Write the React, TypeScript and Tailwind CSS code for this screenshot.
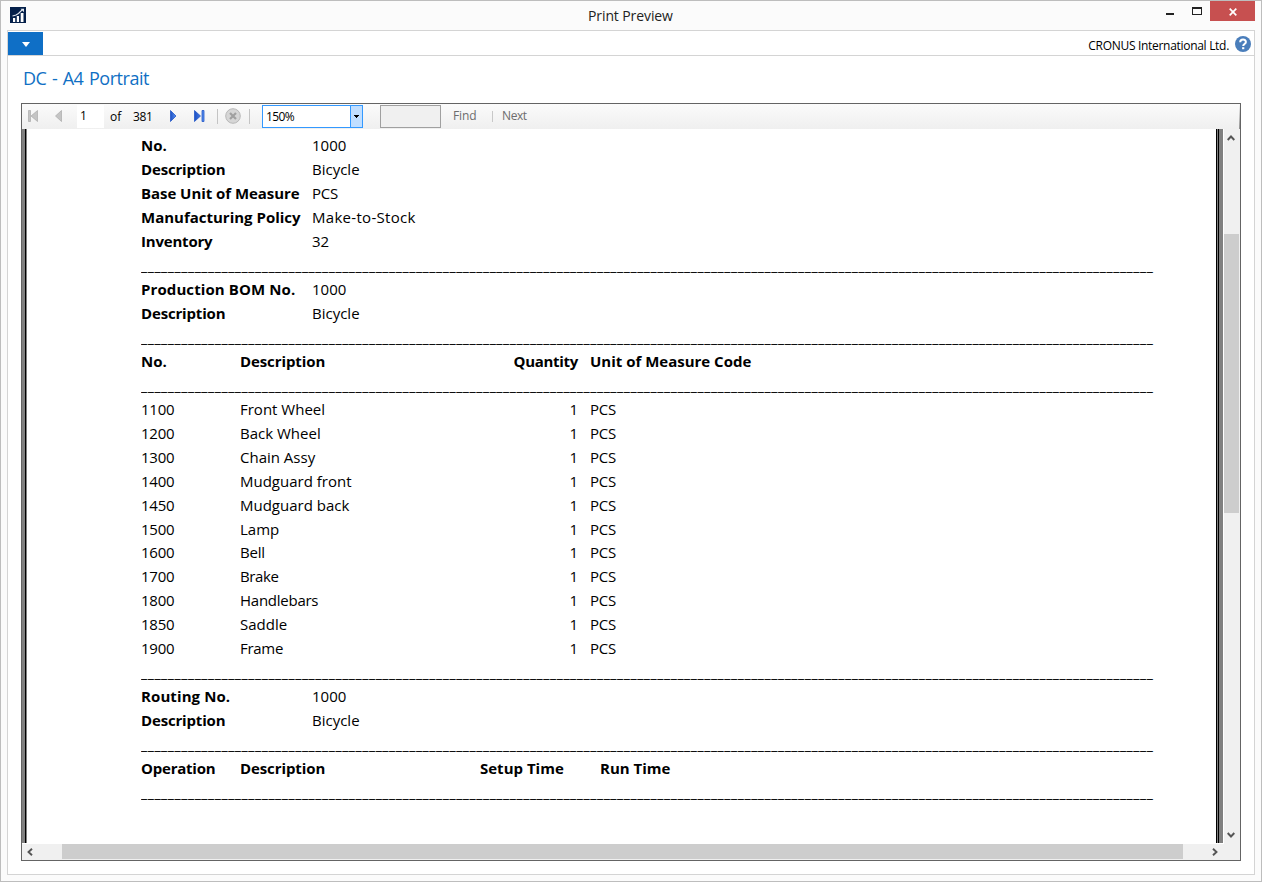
import React from "react";

const underscores = "_".repeat(151);

function Row({ children, className = "h-6" }: { children?: React.ReactNode; className?: string }) {
  return <div className={`flex shrink-0 items-center whitespace-pre ${className}`}>{children}</div>;
}

function Rule() {
  return (
    <div className="h-6 w-[1013px] shrink-0 overflow-hidden whitespace-pre text-[14px] leading-[26px] tracking-[0.573px]">
      {underscores}
    </div>
  );
}

function Field({ label, value, ls = "", vs = "" }: { label: string; value: string; ls?: string; vs?: string }) {
  return (
    <Row>
      <span className={`w-[171px] shrink-0 font-bold ${ls}`}>{label}</span>
      <span className={vs}>{value}</span>
    </Row>
  );
}

const items: [string, string, string][] = [
  ["1100", "Front Wheel", ""],
  ["1200", "Back Wheel", ""],
  ["1300", "Chain Assy", ""],
  ["1400", "Mudguard front", ""],
  ["1450", "Mudguard back", ""],
  ["1500", "Lamp", ""],
  ["1600", "Bell", "tracking-[-0.2px]"],
  ["1700", "Brake", "tracking-[-0.4px]"],
  ["1800", "Handlebars", "tracking-[-0.25px]"],
  ["1850", "Saddle", ""],
  ["1900", "Frame", "tracking-[-0.3px]"],
];

function TitleBar() {
  return (
    <div className="flex h-[29px] shrink-0 items-start">
      <svg className="ml-[9px] mt-[6px]" width="16" height="16" viewBox="0 0 16 16">
        <rect width="16" height="16" fill="#05204a" />
        <path d="M3 11h2.200v4H3zM6.800 9H9v6H6.800zM10.700 6H13.500v9h-2.800z" fill="#fff" />
        <path d="M2.500 9L6 8L8.500 6.500L12.500 2.500" stroke="#dfe5ee" strokeWidth="1.100" fill="none" />
        <path d="M10.500 1.800h3.500v3.500z" fill="#dfe5ee" />
      </svg>
      <div className="ml-[562px] mt-[5px] w-[120px] whitespace-nowrap text-[14px] leading-5 tracking-[-0.1px] text-[#222]">Print Preview</div>
      <svg className="ml-auto mt-[6px]" width="44" height="12" viewBox="0 0 44 12">
        <rect x="0" y="6" width="8" height="2" fill="#222" />
        <path d="M26 0h10v8H26zM27 2v5h8V2z" fill="#222" fillRule="evenodd" />
      </svg>
      <div className="mr-[6px] flex h-5 w-[45px] items-center justify-center bg-[#c75050]">
        <svg className="mt-px" width="8" height="8" viewBox="0 0 8 8">
          <path d="M0.700 0.700L7.300 7.300M7.300 0.700L0.700 7.300" stroke="#fff" strokeWidth="1.700" />
        </svg>
      </div>
    </div>
  );
}

function Toolbar() {
  return (
    <div className="flex h-[25px] shrink-0 items-center bg-linear-to-b from-[#fbfbfb] to-[#efefef] text-[12px]">
      <svg className="shrink-0" width="56" height="25" viewBox="0 0 56 25">
        <path d="M6.500 6.500h2v11h-2zM15.500 6.500v11L9 12z" fill="#c4c4c4" stroke="#aaa" strokeWidth="0.700" />
        <path d="M39.500 6.500v11L33.500 12z" fill="#c4c4c4" stroke="#aaa" strokeWidth="0.700" />
      </svg>
      <div className="-ml-px h-[23px] w-[27px] shrink-0 bg-white pl-[3px] leading-[22px]">1</div>
      <div className="w-[23px] shrink-0 pl-[6px]">of</div>
      <div className="ml-[6px] w-[33px] shrink-0 tracking-[-0.4px]">381</div>
      <svg className="shrink-0" width="96" height="25" viewBox="0 0 96 25">
        <defs>
          <linearGradient id="blue" x1="0" y1="0" x2="1" y2="0">
            <stop offset="0" stopColor="#1c4fc4" />
            <stop offset="1" stopColor="#5c93f0" />
          </linearGradient>
        </defs>
        <path d="M4.500 6.500v11L10 12z" fill="url(#blue)" stroke="#2358c8" strokeWidth="0.800" />
        <path d="M28.500 6.500v11L34.500 12zM36 6.500h2v11h-2z" fill="url(#blue)" stroke="#2358c8" strokeWidth="0.800" />
        <path d="M51.500 5v15M83.500 5v15" stroke="#c4c4c4" strokeWidth="1" />
        <circle cx="67" cy="12" r="7.300" fill="#d6d6d6" stroke="#b8b8b8" />
        <path d="M64 9l6 6M70 9l-6 6" stroke="#a0a0a0" strokeWidth="2.200" />
      </svg>
      <div className="flex h-[23px] w-[101px] shrink-0 border border-[#3399ff] bg-white">
        <div className="flex-1 pl-[3px] leading-[22px] tracking-[-0.6px]">150%</div>
        <div className="flex w-3 items-center justify-center border-l border-[#3399ff] bg-[#c0deff]">
          <svg width="5" height="3" viewBox="0 0 5 3">
            <path d="M0 0h5v1H4v1H3v1H2V2H1V1H0z" fill="#000" />
          </svg>
        </div>
      </div>
      <div className="ml-[17px] h-[23px] w-[61px] shrink-0 border border-[#a0a0a0] bg-[#f0f0f0]" />
      <div className="ml-3 w-[39px] shrink-0 pb-px tracking-[-0.1px] text-[#6d6d6d]">Find</div>
      <div className="h-[11px] w-px shrink-0 bg-[#c8c8c8]" />
      <div className="ml-[9px] pb-px tracking-[-0.4px] text-[#6d6d6d]">Next</div>
      <div className="ml-auto h-full w-px bg-linear-to-b from-[#fbfbfb] to-[#909090]" />
    </div>
  );
}

export default function App() {
  return (
    <div className="flex h-[882px] w-[1262px] flex-col overflow-hidden border border-[#bdbdbd] bg-[#fbfbfb] font-['Open_Sans','Noto_Sans',sans-serif] text-black">
      <TitleBar />
      <div className="ml-[6px] flex h-[845px] w-[1248px] shrink-0 flex-col border border-[#d4d4d4] bg-white">
        <div className="flex h-[25px] shrink-0 items-start border-b border-[#d4d4d4]">
          <div className="mt-px flex h-[23px] w-[35px] items-center justify-center bg-[#0f6fc6]">
            <svg className="ml-px mt-px" width="8" height="5" viewBox="0 0 8 5">
              <path d="M0 0h8L4 5z" fill="#fff" />
            </svg>
          </div>
          <div className="ml-auto mr-[6px] mt-[6px] whitespace-nowrap text-[12px] leading-[18px] tracking-[-0.3px]">CRONUS International Ltd.</div>
          <svg className="mr-[3px] mt-[5px]" width="16" height="16" viewBox="0 0 16 16">
            <circle cx="8" cy="8" r="8" fill="#4a7ebb" />
            <path d="M5.200 6.200C5.200 2.600 10.900 2.700 10.900 5.900C10.900 8 8.200 8 8.200 10" fill="none" stroke="#fff" strokeWidth="2" />
            <rect x="7.100" y="11.200" width="2.200" height="2" fill="#fff" />
          </svg>
        </div>
        <div className="h-[47px] shrink-0 whitespace-nowrap pl-[15px] pt-[9px] text-[18px] leading-[26px] tracking-[-0.45px] text-[#1070c4] [word-spacing:1.2px]">DC - A4 Portrait</div>
        <div className="ml-[13px] flex h-[758px] w-[1220px] shrink-0 flex-col border border-[#646464]">
          <Toolbar />
          <div className="flex h-[715px] shrink-0">
            <div className="h-[714px] w-[3px] bg-[#808080]" />
            <div className="h-[714px] w-px bg-black" />
            <div className="h-[714px] w-px bg-[#808080]" />
            <div className="flex h-[714px] w-[1189px] shrink-0 flex-col overflow-hidden pl-[114px] pt-[4px] text-[15px] leading-6">
              <Field label="No." value="1000" />
              <Field label="Description" value="Bicycle" ls="tracking-[-0.17px]" />
              <Field label="Base Unit of Measure" value="PCS" ls="tracking-[-0.05px]" vs="tracking-[-0.2px]" />
              <Field label="Manufacturing Policy" value="Make-to-Stock" vs="tracking-[0.3px]" />
              <Field label="Inventory" value="32" ls="tracking-[-0.2px]" />
              <Rule />
              <Field label="Production BOM No." value="1000" ls="tracking-[0.1px]" />
              <Field label="Description" value="Bicycle" ls="tracking-[-0.17px]" />
              <Rule />
              <Row className="h-6 font-bold">
                <span className="w-[99px]">No.</span>
                <span className="w-[100px] tracking-[-0.1px]">Description</span>
                <span className="w-[238px] text-right tracking-[-0.3px]">Quantity</span>
                <span className="ml-3">Unit of Measure Code</span>
              </Row>
              <Rule />
              {items.map(([no, name, tracking], i) => (
                <Row key={no} className={i === 5 ? "h-[23px]" : "h-6"}>
                  <span className="w-[99px] tracking-[-0.25px]">{no}</span>
                  <span className={`w-[200px] ${tracking}`}>{name}</span>
                  <span className="w-[138px] text-right">1</span>
                  <span className="ml-3 tracking-[-0.2px]">PCS</span>
                </Row>
              ))}
              <Rule />
              <Field label="Routing No." value="1000" ls="tracking-[0.1px]" />
              <Field label="Description" value="Bicycle" ls="tracking-[-0.17px]" />
              <Rule />
              <Row className="h-6 font-bold">
                <span className="w-[99px] tracking-[-0.22px]">Operation</span>
                <span className="w-[240px] tracking-[-0.1px]">Description</span>
                <span className="w-[120px]">Setup Time</span>
                <span>Run Time</span>
              </Row>
              <Rule />
            </div>
            <div className="h-[714px] w-px bg-black" />
            <div className="h-[714px] w-px bg-[#808080]" />
            <div className="h-[714px] w-px bg-black" />
            <div className="h-[714px] w-1 bg-[#808080]" />
            <div className="flex w-[17px] flex-col border-l border-white bg-[#f0f0f0]">
              <svg className="ml-[3px] mt-[6px]" width="8" height="6" viewBox="0 0 8 6">
                <path d="M0.700 5L4 1.500L7.300 5" fill="none" stroke="#555" strokeWidth="1.900" />
              </svg>
              <div className="mt-[93px] h-[279px] w-[15px] bg-[#cdcdcd]" />
              <svg className="mb-[6px] ml-[3px] mt-auto" width="8" height="6" viewBox="0 0 8 6">
                <path d="M0.700 1L4 4.500L7.300 1" fill="none" stroke="#555" strokeWidth="1.900" />
              </svg>
            </div>
          </div>
          <div className="flex h-4 shrink-0 items-start bg-[#f0f0f0]">
            <svg className="ml-[5px] mt-[4px]" width="6" height="8" viewBox="0 0 6 8">
              <path d="M5 0.700L1.500 4L5 7.300" fill="none" stroke="#555" strokeWidth="1.900" />
            </svg>
            <div className="ml-[29px] h-[15px] w-[1121px] bg-[#cdcdcd]" />
            <svg className="ml-[29px] mt-[4px]" width="6" height="8" viewBox="0 0 6 8">
              <path d="M1 0.700L4.500 4L1 7.300" fill="none" stroke="#555" strokeWidth="1.900" />
            </svg>
          </div>
        </div>
      </div>
    </div>
  );
}
